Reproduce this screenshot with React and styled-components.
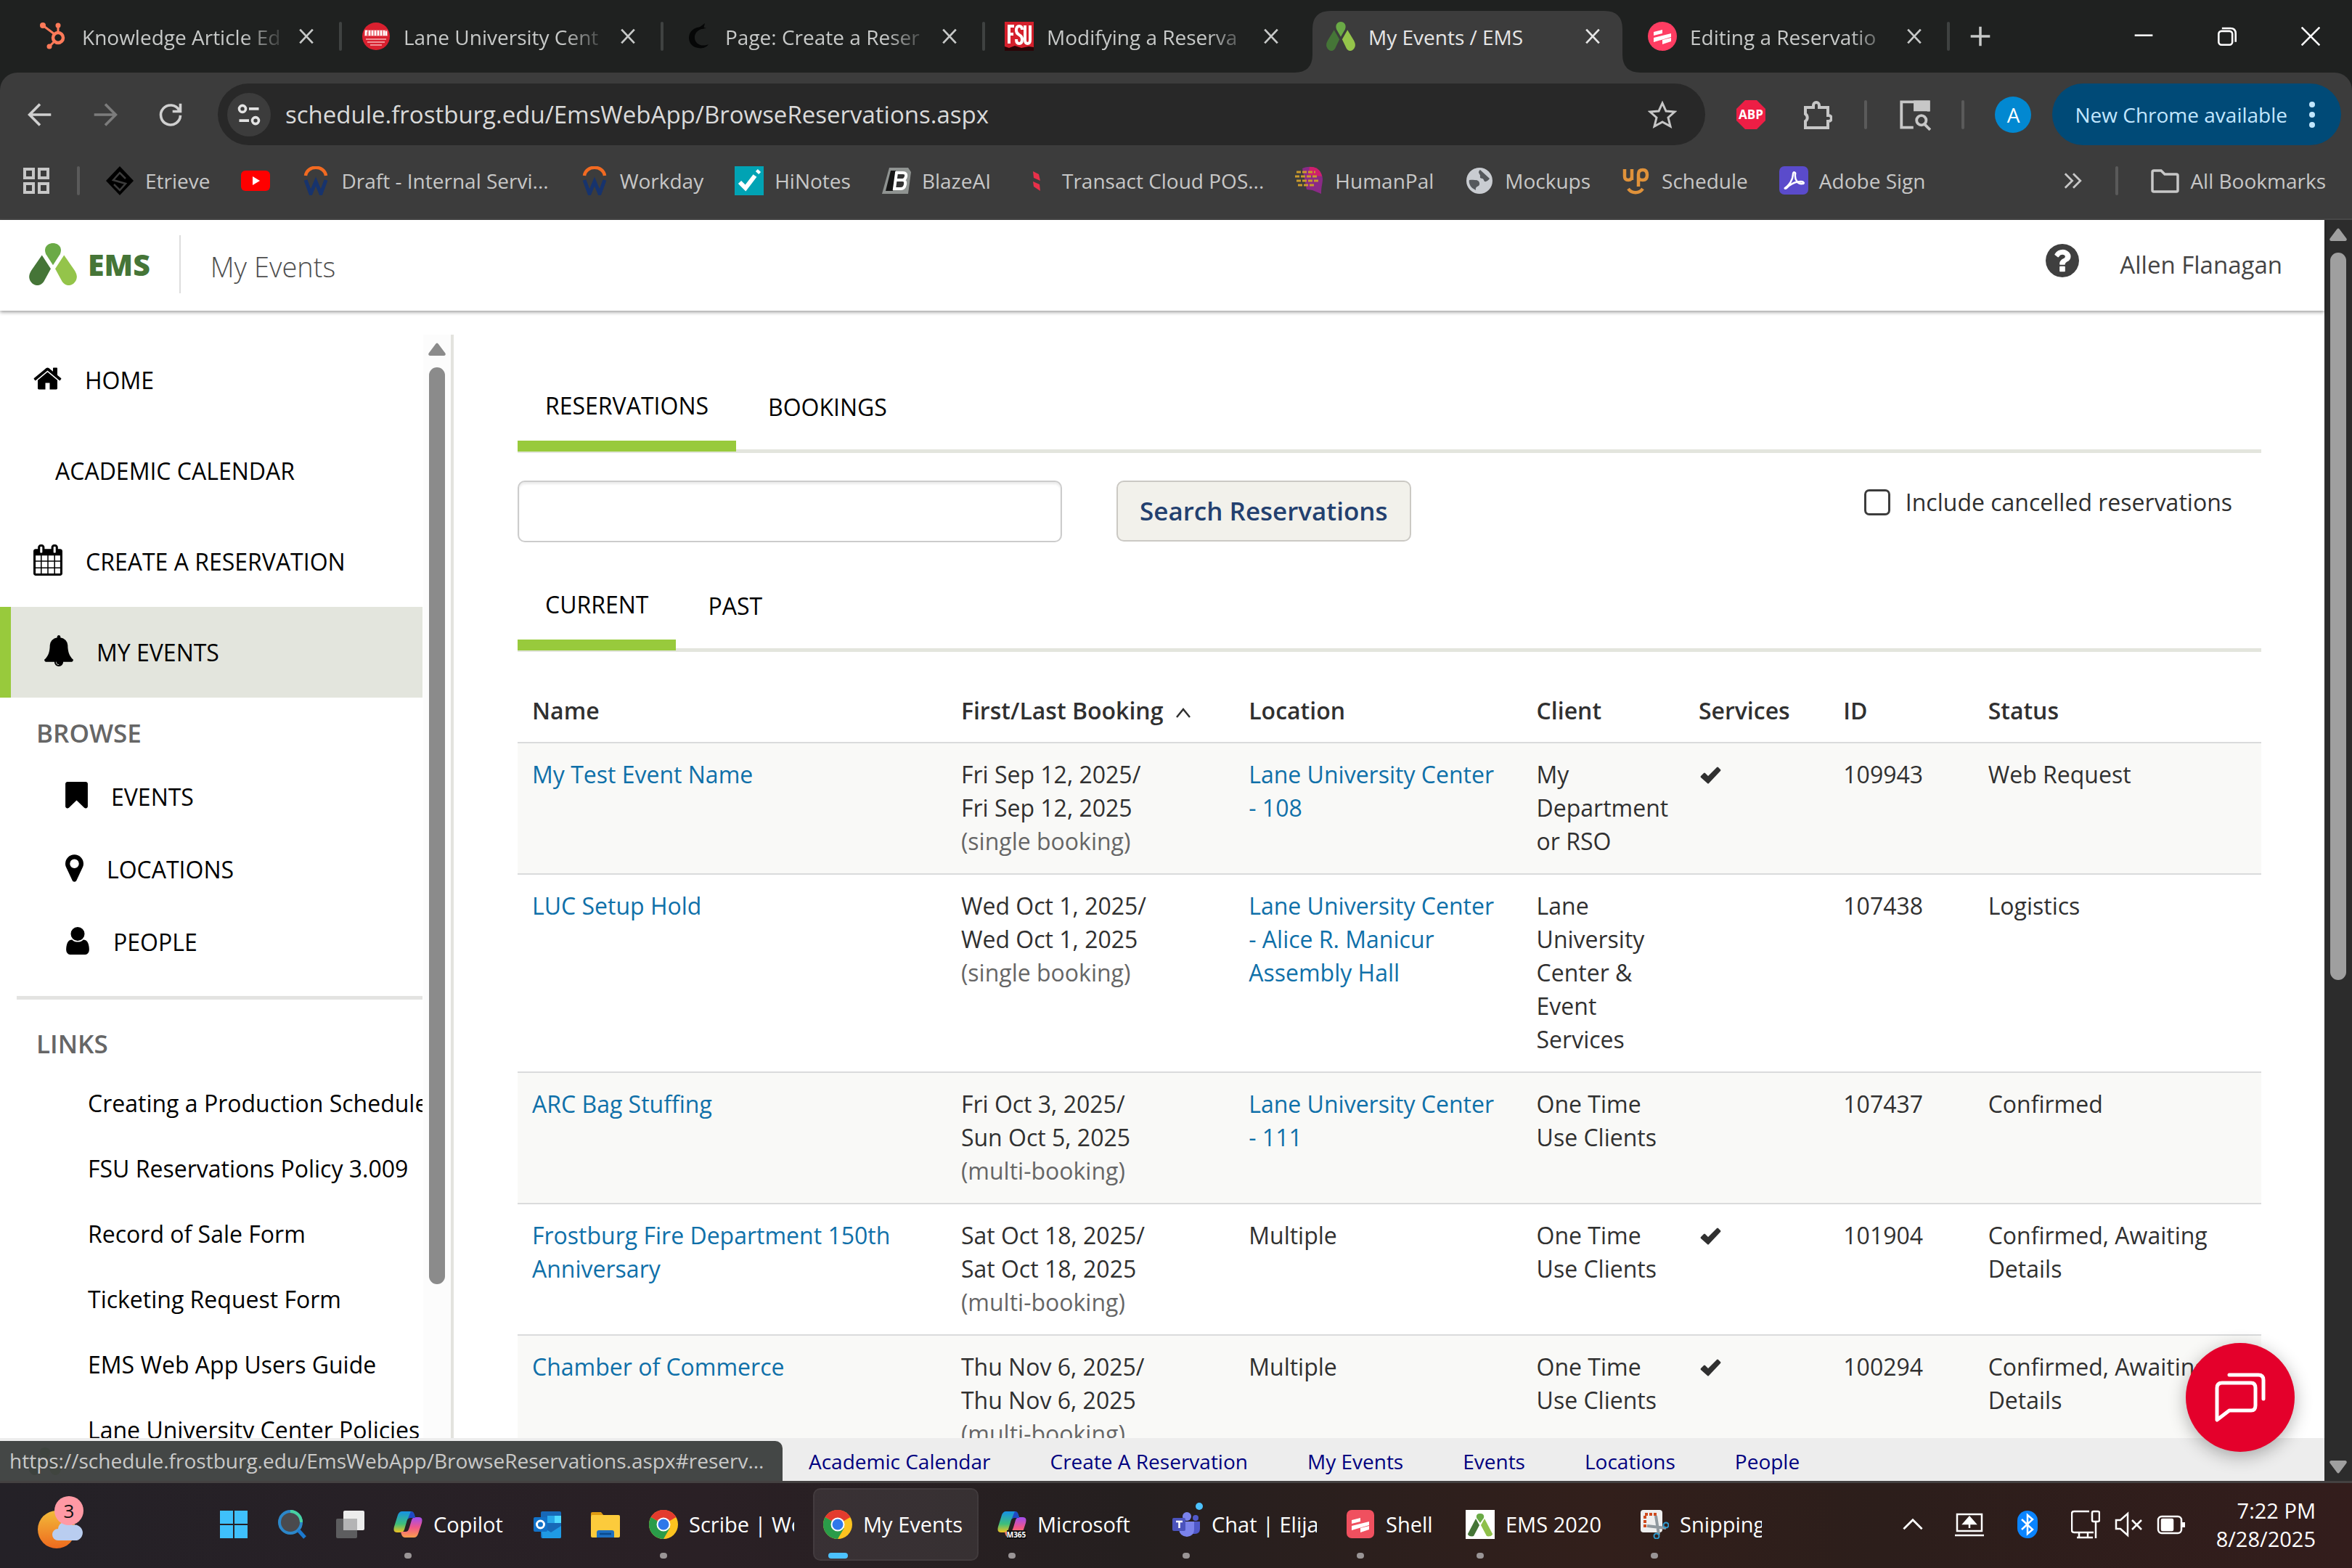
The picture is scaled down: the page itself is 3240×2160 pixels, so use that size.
import React from "react";
import styled, { createGlobalStyle } from "styled-components";

const GlobalStyle = createGlobalStyle`
  *, *::before, *::after { box-sizing: border-box; }
  body { margin: 0; background: #1f2120; font-family: "Open Sans", "Liberation Sans", sans-serif; }
  button, input { font: inherit; color: inherit; margin: 0; }
  button { background: none; border: 0; padding: 0; }
  a { text-decoration: none; color: inherit; }
  svg { display: block; flex: none; }
  ul { list-style: none; margin: 0; padding: 0; }
`;

/* ---------- icons ---------- */

const Line = ({ size = 40, w = 2, children, ...rest }) => (
  <svg width={size} height={size} viewBox="0 0 40 40" fill="none" stroke="currentColor" strokeWidth={w} {...rest}>
    {children}
  </svg>
);
const Art = ({ size = 40, children }) => (
  <svg width={size} height={size} viewBox="0 0 40 40">{children}</svg>
);
const Solid = ({ d, box = "64 0 1664 1792", w = 39, h = 42 }) => (
  <svg width={w} height={h} viewBox={box} fill="currentColor"><path d={d} /></svg>
);

const CloseX = () => <Line size={22} w={5}><path d="M4 3l32 34M36 3L4 37" /></Line>;

const HubSpot = () => (
  <Art>
    <g stroke="#ff7a59" fill="none">
      <circle cx="25" cy="22" r="7" strokeWidth="4.500" />
      <path d="M4 5l16 12M25 6v9M19 28l-6 6" strokeWidth="3" />
    </g>
    <g fill="#ff7a59"><circle cx="4" cy="5" r="4" /><circle cx="25" cy="5" r="3.500" /><circle cx="13" cy="34" r="3.500" /></g>
  </Art>
);
const Frostburg = () => (
  <Art>
    <circle cx="20" cy="20" r="19" fill="#d9202f" />
    <path d="M4 11h32v9H4z" fill="#e8636d" />
    <path d="M5 13h3M5 16h2M6 13v6M11 12v7M15 12v7M19 12v7M23 12v7M27 12v7M31 12v7M34 13v6" stroke="#fff" strokeWidth="2.500" />
    <path d="M6 24h28M8 28h24M12 32h16" stroke="#f6b4b8" strokeWidth="1.500" />
  </Art>
);
const DarkC = () => (
  <Art>
    <path d="M32 9C22 4 8 10 8 22c0 10 9 16 20 14 3-1 6-3 7-5-9 4-18 0-19-8C15 15 22 9 32 9z" fill="#060707" />
    <path d="M22 8l8-6-2 8z" fill="#060707" />
  </Art>
);
const Fsu = () => (
  <Art>
    <rect width="40" height="40" fill="#d5202c" />
    <path d="M0 34l6 2 8-3 9 3 10-2 7 1v5H0z" fill="#2b0406" />
    <path d="M13 6H6v24M6 17h6M24 11q0-5-4-5t-4 6q0 4 4 6t4 6q0 6-4 6t-4-6M28 5v20q0 5 3.500 5t3.500-5V5" fill="none" stroke="#fff" strokeWidth="4" />
  </Art>
);
const EmsMark = ({ w = 65, h = 46 }) => (
  <svg width={w} height={h} viewBox="0 0 130 92" preserveAspectRatio="none">
    <path d="M65 48L46 24C38 10 50 0 65 0s27 10 19 24z" fill="#6aaa46" />
    <path d="M35 26L59 56 40 84C28 98 8 92 2 80c-4-8 0-14 4-20z" fill="#457537" />
    <path d="M95 26L71 56l19 28c12 14 32 8 38-4 4-8 0-14-4-20z" fill="#94c44a" />
  </svg>
);
const ScribeMark = ({ square }) => (
  <Art>
    {square ? <rect x="1" width="38" height="39" rx="7" fill="#f0505f" /> : <circle cx="20" cy="20" r="20" fill="#ff3d62" />}
    <path d="M8 14l12-3v5L8 19zM8 22l24-6v5L8 28zM20 25l12-3v5l-12 4z" fill="#fff" />
  </Art>
);
const Diamond = () => (
  <Art>
    <path d="M20 0l19 20-19 20L1 20z" fill="#000" />
    <path d="M28 17l-8-8-9 10 17 5-8 9-8-8" fill="none" stroke="#3c3c3c" strokeWidth="2.500" />
  </Art>
);
const YouTube = () => (
  <Art><rect x="0" y="6" width="40" height="28" rx="6" fill="#f00" /><path d="M16 14l10 6-10 6z" fill="#fff" /></Art>
);
const WorkdayMark = () => (
  <Art>
    <path d="M6 13C8-2 32-2 34 13" fill="none" stroke="#f26a21" strokeWidth="4.500" />
    <path d="M6 19l7 19 7-17 7 17 7-19" fill="none" stroke="#17336d" strokeWidth="5" />
  </Art>
);
const HiNotesMark = () => (
  <Art><rect width="40" height="40" fill="#00a3b4" /><path d="M7 22l8 8 13-17M31 9l3-3" fill="none" stroke="#fff" strokeWidth="6" /></Art>
);
const BlazeMark = () => (
  <Art>
    <path d="M10 2h26l4 6-4 30H0z" fill="#8f9391" />
    <path d="M12 6L5 34h10l4-28z" fill="#151515" />
    <path d="M20 9h9q5 0 4 5-1 5-5 5 5 0 4 6-1 6-6 6h-9zM19 19h9" fill="#333" stroke="#fff" strokeWidth="4" />
  </Art>
);
const TransactMark = () => (
  <Art><path d="M15 7l8 4 2 9-9-4zM15 21l9 4 1 9-9-6z" fill="#e8304a" /></Art>
);
const HumanPalMark = () => (
  <Art>
    <path d="M10 3C24-3 38 4 38 18c0 6-2 9-2 20l-12-5-8-1z" fill="#8a2a86" />
    <path d="M20 1C32 0 36 8 37 14L18 12z" fill="#cf1f6c" />
    <path d="M2 8h26M0 14h32M2 20h30M4 26h24" stroke="#c99a2c" strokeWidth="3" strokeDasharray="6 2" />
  </Art>
);
const GlobeMark = () => (
  <Art>
    <circle cx="20" cy="20" r="18" fill="#c9ccd1" />
    <path d="M6 19c8-1 15 0 14 6-1 4-6 2-5 8l-5-3c-3-3-5-7-4-11zM21 5c-5 4 1 6 0 9-1 4 4 1 5 5s5 2 8-2" fill="#55585c" />
  </Art>
);
const UpMark = () => (
  <Art>
    <g fill="none" stroke="#e0923a" strokeWidth="4.500">
      <path d="M4 4v10q0 5 5 5t5-5V4v15" /><path d="M23 28V11q0-6 6-6t6 7-6 7-6-4" /><path d="M9 31c5 7 15 7 20 0" />
    </g>
  </Art>
);
const AdobeMark = () => (
  <Art>
    <rect width="40" height="39" rx="7" fill="#5a4bcb" />
    <path d="M8 30c6-4 11-12 11-19 0-4 4-3 3 0-1 8 4 14 10 13 3 0 2-3-2-3-7 0-14 3-20 9-1 1-3 1-2 0z" fill="none" stroke="#fff" strokeWidth="2.500" />
  </Art>
);
const ChromeMark = () => (
  <Art>
    <circle cx="20" cy="20" r="20" fill="#fcc31f" />
    <path d="M20 20L2.700 10A20 20 0 0137.300 10z" fill="#e33b2e" />
    <path d="M2.700 10A20 20 0 0020 40l8.700-15L20 20z" fill="#2a9c49" />
    <path d="M2.700 10A20 20 0 0137.300 10H20z" fill="#e33b2e" />
    <circle cx="20" cy="20" r="9.500" fill="#fff" /><circle cx="20" cy="20" r="7.500" fill="#2f78ea" />
  </Art>
);
const CopilotMark = ({ badge }) => (
  <Art>
    <defs>
      <linearGradient id="cpa" x1="0" y1="0" x2="0" y2="1"><stop offset="0" stopColor="#1591e6" /><stop offset=".6" stopColor="#3fbf7a" /><stop offset="1" stopColor="#f2c320" /></linearGradient>
      <linearGradient id="cpb" x1="0" y1="0" x2="0" y2="1"><stop offset="0" stopColor="#a04df0" /><stop offset=".5" stopColor="#f0568a" /><stop offset="1" stopColor="#fb9f4c" /></linearGradient>
    </defs>
    <path d="M12 2h12c4 0 5 4 6 9h-7c-3 0-4 2-5 6l-3 10c-1 3-3 4-6 4H5c-5 0-5-4-4-8L6 7c1-3 3-5 6-5z" fill="url(#cpa)" />
    <path d="M28 38H16c-4 0-5-4-6-8h7c3 0 4-3 5-6l3-10c1-3 3-4 6-4h4c5 0 5 4 4 8l-5 15c-1 3-3 5-6 5z" fill="url(#cpb)" />
    <path d="M24 2c4 0 5 4 6 9h-7c-2 0-3 1-4 3z" fill="#1f49c4" />
    {badge && <><rect x="13" y="28" width="27" height="12" fill="#111" /><text x="26" y="38" textAnchor="middle" fontSize="10" fontWeight="700" fill="#fff">M365</text></>}
  </Art>
);
const WindowsMark = () => (
  <Art><path d="M1 1h18v18H1zM21 1h18v18H21zM1 21h18v18H1zM21 21h18v18H21z" fill="#3fc0fb" /></Art>
);
const SearchMark = () => (
  <Art>
    <circle cx="18" cy="17" r="15" fill="#4a4a4d" stroke="#2c87c9" strokeWidth="4" />
    <path d="M18 2a15 15 0 0115 15" fill="none" stroke="#48d2a0" strokeWidth="4" />
    <path d="M29 28l9 10" stroke="#1b79cf" strokeWidth="5" />
  </Art>
);
const TaskViewMark = () => (
  <Art><rect x="1" y="12" width="29" height="27" rx="2" fill="#5d5d5f" /><rect x="11" y="1" width="29" height="27" rx="2" fill="#ececec" /><path d="M11 12h19v16H11z" fill="#b4b4b5" /></Art>
);
const OutlookMark = () => (
  <Art>
    <rect x="11" y="2" width="28" height="37" rx="2" fill="#1769b8" /><path d="M20 8h10v10H20z" fill="#28a8ea" /><path d="M30 8h9v10h-9z" fill="#50d9ff" />
    <path d="M11 22l14 9 14-9v15a2 2 0 01-2 2H13z" fill="#1f9ae4" /><rect x="1" y="10" width="19" height="20" rx="2" fill="#1272c8" />
    <circle cx="10.500" cy="20" r="5" fill="none" stroke="#fff" strokeWidth="3" />
  </Art>
);
const FolderMark = () => (
  <Art><path d="M0 5q0-2 2-2h12l4 5H0z" fill="#dd9a13" /><rect y="7" width="40" height="31" rx="2" fill="#fccb3c" /><path d="M8 38V31q0-3 3-3h18q3 0 3 3v7z" fill="#1e6fc0" /><path d="M12 33h16" stroke="#0a4a8c" strokeWidth="2.500" /></Art>
);
const TeamsMark = () => (
  <Art>
    <circle cx="21" cy="9" r="6" fill="#7b83eb" /><circle cx="33" cy="11" r="4" fill="#5059c9" />
    <path d="M26 16h13v10q0 7-7 7h-6z" fill="#5059c9" /><path d="M10 16h21v11q0 9-10 10-10-1-11-10z" fill="#7b83eb" />
    <rect x="1" y="11" width="18" height="18" rx="2" fill="#4b53bc" /><path d="M6 16h9M10.500 16v9" stroke="#fff" strokeWidth="2.500" />
  </Art>
);
const EmsTile = () => (
  <Art>
    <rect width="40" height="40" fill="#fff" />
    <path d="M20 18l-5-7c-1-5 2-6 5-6s6 1 5 6z" fill="#6aaa46" /><path d="M14 12l5 9-8 15c-3 1-8 0-8-3z" fill="#457537" /><path d="M26 12l-5 9 8 15c3 1 8 0 8-3z" fill="#8fc04a" />
  </Art>
);
const SnipMark = () => (
  <Art>
    <rect x="1" width="30" height="31" rx="4" fill="#efefef" /><path d="M7 24V6h18" fill="none" stroke="#cf4a1e" strokeWidth="4" strokeDasharray="4 2" />
    <path d="M22 8l4 26M10 22l26 3" stroke="#90999f" strokeWidth="4" /><circle cx="36" cy="21" r="3.500" fill="none" stroke="#2f9bd0" strokeWidth="2" /><circle cx="23" cy="36" r="3.500" fill="none" stroke="#2f9bd0" strokeWidth="2" />
  </Art>
);
const WeatherMark = () => (
  <svg width="64" height="54" viewBox="0 0 64 54">
    <defs><linearGradient id="sun" x1="0" y1="0" x2="0" y2="1"><stop offset="0" stopColor="#f2bb3a" /><stop offset="1" stopColor="#ee6a1e" /></linearGradient></defs>
    <circle cx="26" cy="27" r="26" fill="url(#sun)" />
    <path d="M28 42a8 8 0 010-16 11 11 0 0120-5 10 10 0 016 21z" fill="#b9cdf0" />
  </svg>
);

const P = {
  home: "M1408 992v480q0 26-19 45t-45 19h-384v-384h-256v384h-384q-26 0-45-19t-19-45v-480q0-1 .5-3t.5-3l575-474 575 474q1 2 1 6zm223-69l-62 74q-8 9-21 11h-3q-13 0-21-7l-692-577-692 577q-12 8-24 7-13-2-21-11l-62-74q-8-10-7-23.5t11-21.5l719-599q32-26 76-26t76 26l244 204v-195q0-14 9-23t23-9h192q14 0 23 9t9 23v408l219 182q10 8 11 21.5t-7 23.5z",
  calendar: "M192 1664h288v-288h-288v288zm352 0h320v-288h-320v288zm-352-352h288v-320h-288v320zm352 0h320v-320h-320v320zm-352-384h288v-288h-288v288zm736 736h320v-288h-320v288zm-384-736h320v-288h-320v288zm768 736h288v-288h-288v288zm-384-352h320v-320h-320v320zm-352-864v-288q0-13-9.5-22.5t-22.5-9.5h-64q-13 0-22.5 9.5t-9.5 22.5v288q0 13 9.5 22.5t22.5 9.5h64q13 0 22.5-9.5t9.5-22.5zm736 864h288v-320h-288v320zm-384-384h320v-288h-320v288zm384 0h288v-288h-288v288zm32-480v-288q0-13-9.5-22.5t-22.5-9.5h-64q-13 0-22.5 9.5t-9.5 22.5v288q0 13 9.5 22.5t22.5 9.5h64q13 0 22.5-9.5t9.5-22.5zm384-64v1280q0 52-38 90t-90 38h-1408q-52 0-90-38t-38-90v-1280q0-52 38-90t90-38h128v-96q0-66 47-113t113-47h64q66 0 113 47t47 113v96h384v-96q0-66 47-113t113-47h64q66 0 113 47t47 113v96h128q52 0 90 38t38 90z",
  bell: "M912 1696q0-16-16-16-59 0-101.5-42.5t-42.5-101.5q0-16-16-16t-16 16q0 73 51.5 124.5t124.5 51.5q16 0 16-16zm816-288q0 52-38 90t-90 38h-448q0 106-75 181t-181 75-181-75-75-181h-448q-52 0-90-38t-38-90q50-42 91-88t85-119.5 74.5-158.5 50-206 19.5-260q0-152 117-282.5t307-158.5q-8-19-8-39 0-40 28-68t68-28 68 28 28 68q0 20-8 39 190 28 307 158.5t117 282.5q0 139 19.5 260t50 206 74.5 158.5 85 119.5 91 88z",
  bookmark: "M1420 128q23 0 44 9 33 13 52.5 41t19.5 62v1289q0 34-19.5 62t-52.5 41q-19 8-44 8-48 0-83-32l-441-424-441 424q-36 33-83 33-23 0-44-9-33-13-52.5-41t-19.5-62v-1289q0-34 19.5-62t52.5-41q21-9 44-9h1048z",
  pin: "M1152 640q0-106-75-181t-181-75-181 75-75 181 75 181 181 75 181-75 75-181zm256 0q0 109-33 179l-364 774q-16 33-47.5 52t-67.5 19-67.5-19-46.5-52l-365-774q-33-70-33-179 0-212 150-362t362-150 362 150 150 362z",
  user: "M1536 1399q0 109-62.5 187t-150.5 78h-854q-88 0-150.5-78t-62.5-187q0-85 8.5-160.5t31.5-152 58.5-131 94-89 134.5-34.5q131 128 313 128t313-128q76 0 134.5 34.5t94 89 58.5 131 31.5 152 8.5 160.5zm-256-887q0 159-112.5 271.5t-271.5 112.5-271.5-112.5-112.5-271.5 112.5-271.5 271.5-112.5 271.5 112.5 112.5 271.5z",
  help: "M1024 1376v-192q0-14-9-23t-23-9h-192q-14 0-23 9t-9 23v192q0 14 9 23t23 9h192q14 0 23-9t9-23zm256-672q0-88-55.5-163t-138.5-116-170-41q-243 0-371 213-15 24 8 42l132 100q7 6 19 6 16 0 25-12 53-68 86-92 34-24 86-24 48 0 85.5 26t37.5 59q0 38-20 61t-68 45q-63 28-115.5 86.5t-52.5 125.5v36q0 14 9 23t23 9h192q14 0 23-9t9-23q0-19 21.5-49.5t54.5-49.5q32-18 49-28.5t46-35 44.5-48 28-60.5 12.5-81zm384 192q0 209-103 385.5t-279.5 279.5-385.5 103-385.5-103-279.5-279.5-103-385.5 103-385.5 279.5-279.5 385.5-103 385.5 103 279.5 279.5 103 385.500z",
};

const TickMark = () => (
  <svg width="32" height="24" viewBox="0 0 32 24" aria-label="Yes">
    <path d="M3 13l4-4q1-1 2 0l4 4L25 1q1-1 2 0l3 3q1 1 0 2L14 23q-1 1-2 0L3 15q-1-1 0-2z" fill="#303030" />
  </svg>
);

/* ---------- browser chrome ---------- */

const Screen = styled.div`
  display: flex; flex-direction: column; height: 100vh; overflow: hidden; color: #2f2f2f;
`;
const TabStrip = styled.div`
  display: flex; align-items: stretch; flex: none; height: 100px; padding-left: 28px;
  background: #1f2120; color: #c7c9c8; font-size: 28px;
`;
const Tab = styled.div`
  position: relative; display: flex; align-items: center; width: 443px; height: 100px;
  padding: 0 38px 0 27px; gap: 14px; color: ${(p) => (p.$active ? "#e6e6e6" : "inherit")};
  ${(p) => p.$line && "&::after { content: ''; position: absolute; right: 0; top: 30px; width: 4px; height: 40px; border-radius: 2px; background: #3f4241; }"}
`;
const ActiveShape = styled.svg`position: absolute; left: -17px; top: 15px; width: 477px; height: 85px;`;
const TabButton = styled.button`
  position: relative; display: flex; align-items: center; gap: 18px; flex: 1; min-width: 0; text-align: left;
`;
const TabTitle = styled.span`
  flex: 1; overflow: hidden; white-space: nowrap; padding-top: 2px; line-height: 48px;
  ${(p) => p.$fade && "mask-image: linear-gradient(90deg, #000 78%, transparent 100%);"}
`;
const TabClose = styled.button`position: relative;`;
const NewTab = styled.button`align-self: center; margin-left: 28px;`;
const WindowButtons = styled.div`display: flex; align-items: center; margin-left: auto; color: #fff;`;
const WindowButton = styled.button`display: grid; place-items: center; width: 115px; height: 100px;`;

const Toolbar = styled.div`
  display: flex; align-items: center; flex: none; height: 115px; padding: 0 15px 0 37px;
  background: #3c3c3c; color: #c7c7c7; border-radius: 24px 24px 0 0;
`;
const NavButtons = styled.div`display: flex; gap: 54px; margin-right: 47px;`;
const NavButton = styled.button`width: 36px; color: ${(p) => (p.$off ? "#7c7c7c" : "#d0d0d0")};`;
const Omnibox = styled.div`
  display: flex; align-items: center; flex: 1; height: 85px; padding: 0 39px 0 13px; border-radius: 43px; background: #282828;
`;
const SiteInfo = styled.button`display: grid; place-items: center; width: 60px; height: 60px; border-radius: 50%; background: #3c3c3c; color: #e3e3e3;`;
const Url = styled.input`flex: 1; min-width: 0; margin-left: 20px; padding: 0; border: 0; background: none; color: #dadada; font-size: 33px; line-height: 48px;`;
const Extensions = styled.div`display: flex; align-items: center; margin-left: 43px;`;
const Gap = styled.div`width: ${(p) => p.$w}px;`;
const Rule = styled.div`width: 4px; height: 40px; border-radius: 2px; background: #5a5a5a;`;
const Avatar = styled.button`width: 50px; height: 50px; border-radius: 50%; background: #0288d1; color: #fff; font-size: 28px; line-height: 50px;`;
const UpdatePill = styled.button`
  display: flex; align-items: center; gap: 30px; height: 85px; margin-left: 29px; padding: 0 36px 0 31px; border-radius: 43px;
  background: #004a77; color: #c2e7ff; font-size: 28px; white-space: nowrap;
`;

const Bookmarks = styled.div`
  display: flex; align-items: center; flex: none; height: 88px; padding: 0 36px 18px 30px; background: #3c3c3c;
  border-bottom: 2px solid #474747; color: #c7c7c7; font-size: 28px; white-space: nowrap;
`;
const BookmarkList = styled.nav`display: flex; gap: 43px; margin-left: 35px;`;
const Bookmark = styled.a`display: flex; align-items: center; gap: 15px; line-height: 44px;`;
const BookmarkEnd = styled.div`display: flex; align-items: center; margin-left: auto; gap: 44px;`;

/* ---------- page ---------- */

const Viewport = styled.div`position: relative; display: flex; flex: 1; min-height: 0; border-bottom: 3px solid #444141; background: #fff;`;
const Page = styled.div`position: relative; display: flex; flex-direction: column; flex: 1; min-width: 0;`;
const Scroll = styled.div`
  display: flex; flex-direction: column; align-items: center; flex: none; width: 38px;
  padding: ${(p) => p.$pad}; background: ${(p) => (p.$dark ? "#2c2c2c" : "#fcfcfc")}; color: ${(p) => (p.$dark ? "#9f9f9f" : "#8b8b8b")};
`;
const Thumb = styled.div`width: 22px; margin: 16px 0 auto; border-radius: 11px; height: ${(p) => p.$h}; background: currentColor;`;
const Header = styled.header`
  position: relative; display: flex; align-items: center; flex: none; height: 125px; padding: 0 58px 4px 40px;
  background: #fff; box-shadow: 0 2px 5px rgba(0, 0, 0, .4);
`;
const Brand = styled.a`
  display: flex; align-items: center; gap: 15px; height: 80px; padding-right: 40px; border-right: 2px solid #ddd;
  color: #457537; font-size: 41px; font-weight: 800; line-height: 48px;
`;
const PageTitle = styled.h1`margin: 6px auto 0 41px; color: #4f4f4f; font-size: 38px; font-weight: 300; line-height: 48px;`;
const HelpButton = styled.button`margin: 0 56px 10px 0; color: #3f3f3f;`;
const UserButton = styled.button`padding-top: 2px; color: #444; font-size: 33px; line-height: 48px;`;

const Body = styled.div`display: flex; flex: 1; min-height: 0; overflow: hidden;`;
const Sidebar = styled.aside`display: flex; flex: none; width: 625px; margin-top: 33px; border-right: 4px solid #e3e3de; color: #000; font-size: 32px;`;
const SideNav = styled.nav`flex: 1; min-width: 0; overflow: hidden; margin-right: 1px; white-space: nowrap;`;
const SideItem = styled.a`
  display: flex; align-items: center; gap: 32px; height: 125px; padding-left: ${(p) => p.$indent || 46}px; line-height: 48px;
  svg { margin-bottom: 5px; }
  ${(p) => p.$active && "background: #e3e5dd; border-left: 15px solid #98ca3c;"}
`;
const SideHeading = styled.h2`margin: 0; padding: ${(p) => p.$pad}; color: #666; font-size: 35px; font-weight: 600; line-height: 48px;`;
const SubItem = styled(SideItem)`height: 100px; padding-left: 90px;`;
const SideRule = styled.hr`height: 5px; margin: 24px 0 0 23px; border: 0; background: #e3e3e1;`;
const SideLink = styled.a`display: block; padding-left: 121px; line-height: 90px;`;

const Main = styled.main`flex: 1; min-width: 0; padding: 107px 87px 0 88px; font-size: 32px; line-height: 46px;`;
const Tabs = styled.div`display: flex; align-items: flex-start; margin-top: ${(p) => p.$top || 0}px; height: 89px; border-bottom: 5px solid #e3e5dd; color: #000;`;
const PageTab = styled.button`
  line-height: 48px;
  ${(p) => (p.$active ? "height: 87px; padding: 0 38px 24px; border-bottom: 15px solid #98ca3c;" : "padding: 2px 44px 0;")}
`;
const SearchRow = styled.form`display: flex; align-items: flex-start; margin-top: 38px;`;
const SearchBox = styled.input`
  width: 750px; height: 85px; padding: 0 20px; border: 2px solid #ccc; border-radius: 10px; background: #fff; box-shadow: inset 0 3px 3px rgba(0, 0, 0, .08);
`;
const SearchButton = styled.button`
  height: 84px; margin-left: 75px; padding: 0 30px; border: 2px solid #cbc9c4; border-radius: 10px; background: #f2f1eb; color: #23406f; font-size: 35px; font-weight: 600;
`;
const CheckLabel = styled.label`display: flex; align-items: center; gap: 21px; margin: 7px 40px 0 auto; color: #2f2f2f;`;
const CheckInput = styled.input`appearance: none; width: 36px; height: 36px; border: 3px solid #3c3c3c; border-radius: 7px; background: #fff;`;

const Table = styled.table`width: 100%; margin-top: 36px; border-collapse: separate; border-spacing: 0; table-layout: fixed; color: #303030;`;
const Col = styled.col`width: ${(p) => p.$w}%;`;
const Th = styled.th`padding: 22px 10px 20px 20px; border-bottom: 2px solid #dadbdc; text-align: left; font-weight: 600; white-space: nowrap;`;
const SortIcon = styled.svg`display: inline-block; margin-left: 18px; vertical-align: middle;`;
const Row = styled.tr`background: ${(p) => (p.$odd ? "#f9f9f7" : "#fff")};`;
const Td = styled.td`padding: 20px ${(p) => (p.$wide ? 30 : 10)}px 21px 20px; border-bottom: 2px solid #dadbdc; vertical-align: top; svg { margin-top: 12px; }`;
const CellLink = styled.a`color: #0f70a9;`;
const Note = styled.span`display: block; color: #666;`;
const DateLine = styled.span`display: block;`;

const Footer = styled.footer`
  display: flex; align-items: center; flex: none; height: 59px; padding: 4px 40px 0; background: #ededed; color: #00007f; font-size: 28px; white-space: nowrap;
`;
const FooterInfo = styled.div`width: 1074px;`;
const FooterNav = styled.nav`display: flex; gap: 82px;`;
const LinkHint = styled.div`
  position: absolute; left: 0; bottom: 0; width: 1078px; height: 55px; padding: 0 13px; border-radius: 0 10px 0 0;
  background: rgba(60, 63, 62, .96); color: #c9c9c9; font-size: 28px; line-height: 54px; white-space: nowrap;
`;
const ChatButton = styled.button`
  position: absolute; right: 41px; bottom: 40px; display: grid; place-items: center; width: 150px; height: 150px; border-radius: 50%;
  background: #e4002b; color: #fff; box-shadow: 0 6px 24px rgba(0, 0, 0, .3);
`;

/* ---------- taskbar ---------- */

const Taskbar = styled.div`
  display: flex; align-items: center; flex: none; height: 117px; padding: 0 50px 4px 52px; color: #fff; font-size: 29px;
  background: linear-gradient(90deg, #242127 0%, #2a2025 30%, #251f1f 48%, #321f1b 68%, #2c1e1b 80%, #331d1c 100%);
`;
const Weather = styled.button`position: relative; width: 64px; margin-top: 14px;`;
const WeatherBadge = styled.span`position: absolute; left: 23px; top: -19px; width: 40px; height: 40px; border-radius: 50%; background: #ff99a4; color: #111; font-size: 26px; line-height: 40px;`;
const Apps = styled.div`display: flex; gap: 12px; margin-left: 172px;`;
const AppItem = styled.button`
  position: relative; display: flex; align-items: center; gap: 15px; width: ${(p) => p.$w || 68}px; height: 100px; padding: 0 14px; border-radius: 10px;
  ${(p) => p.$active && "background: rgba(255, 255, 255, .08); box-shadow: inset 0 0 0 2px rgba(255, 255, 255, .05);"}
  ${(p) => p.$run && `&::after { content: ""; position: absolute; bottom: 3px; height: 8px; border-radius: 4px; left: ${p.$active ? 21 : 29}px; width: ${p.$active ? 27 : 10}px; background: ${p.$active ? "#4cc2ff" : "#9a9596"}; }`}
`;
const AppLabel = styled.span`flex: 1; overflow: hidden; white-space: nowrap; text-align: left; line-height: 44px;`;
const Alert = styled.span`position: absolute; left: 47px; top: 20px; width: 10px; height: 10px; border-radius: 50%; background: #4cc2ff;`;
const Tray = styled.div`display: flex; align-items: center; gap: 20px; margin-left: auto;`;
const TrayGroup = styled.div`display: flex; align-items: center; gap: ${(p) => p.$gap}px;`;
const Clock = styled.time`margin-left: 22px; text-align: right; line-height: 39px;`;

const browserTabs = [
  { t: "Knowledge Article Ed", i: <HubSpot />, fade: true, line: true },
  { t: "Lane University Cent", i: <Frostburg />, fade: true, line: true },
  { t: "Page: Create a Reser", i: <DarkC />, fade: true, line: true },
  { t: "Modifying a Reserva", i: <Fsu />, fade: true },
  { t: "My Events / EMS", i: <EmsMark w={40} h={40} />, active: true },
  { t: "Editing a Reservatio", i: <ScribeMark />, fade: true, line: true },
];
const bookmarks = [
  ["Etrieve", <Diamond />], ["", <YouTube />], ["Draft - Internal Servi...", <WorkdayMark />], ["Workday", <WorkdayMark />],
  ["HiNotes", <HiNotesMark />], ["BlazeAI", <BlazeMark />], ["Transact Cloud POS...", <TransactMark />], ["HumanPal", <HumanPalMark />],
  ["Mockups", <GlobeMark />], ["Schedule", <UpMark />], ["Adobe Sign", <AdobeMark />],
];
const sideLinks = ["Creating a Production Schedule", "FSU Reservations Policy 3.009", "Record of Sale Form", "Ticketing Request Form", "EMS Web App Users Guide", "Lane University Center Policies"];
const rows = [
  ["My Test Event Name", "Fri Sep 12, 2025/", "Fri Sep 12, 2025", "(single booking)", "Lane University Center - 108", "My Department or RSO", true, "109943", "Web Request"],
  ["LUC Setup Hold", "Wed Oct 1, 2025/", "Wed Oct 1, 2025", "(single booking)", "Lane University Center - Alice R. Manicur Assembly Hall", "Lane University Center & Event Services", false, "107438", "Logistics"],
  ["ARC Bag Stuffing", "Fri Oct 3, 2025/", "Sun Oct 5, 2025", "(multi-booking)", "Lane University Center - 111", "One Time Use Clients", false, "107437", "Confirmed"],
  ["Frostburg Fire Department 150th Anniversary", "Sat Oct 18, 2025/", "Sat Oct 18, 2025", "(multi-booking)", "Multiple", "One Time Use Clients", true, "101904", "Confirmed, Awaiting Details"],
  ["Chamber of Commerce", "Thu Nov 6, 2025/", "Thu Nov 6, 2025", "(multi-booking)", "Multiple", "One Time Use Clients", true, "100294", "Confirmed, Awaiting Details"],
];
const apps = [
  { n: "Start", i: <WindowsMark /> }, { n: "Search", i: <SearchMark /> }, { n: "Task view", i: <TaskViewMark /> },
  { l: "Copilot", i: <CopilotMark />, w: 180, run: true }, { n: "Outlook", i: <OutlookMark /> }, { n: "Files", i: <FolderMark /> },
  { l: "Scribe | Wo", i: <ChromeMark />, w: 228, run: true }, { l: "My Events", i: <ChromeMark />, w: 228, run: true, active: true },
  { l: "Microsoft", i: <CopilotMark badge />, w: 228, run: true }, { l: "Chat | Elija", i: <TeamsMark />, w: 228, run: true, alert: true },
  { l: "Shell", i: <ScribeMark square />, w: 153, run: true }, { l: "EMS 2020", i: <EmsTile />, w: 228, run: true },
  { l: "Snipping", i: <SnipMark />, w: 196, run: true },
];

const Arrow = ({ down }) => (
  <svg width="24" height="18" viewBox="0 0 24 18"><path d={down ? "M2 0h20q3 1 1 4L14 16q-2 3-4 0L1 4q-2-3 1-4z" : "M2 18h20q3-1 1-4L14 2q-2-3-4 0L1 14q-2 3 1 4z"} fill="currentColor" /></svg>
);

export default function App() {
  return (
    <Screen>
      <GlobalStyle />
      <TabStrip>
        {browserTabs.map((b) => (
          <Tab key={b.t} $active={b.active} $line={b.line}>
            {b.active && <ActiveShape viewBox="0 0 477 85"><path d="M0 85Q25 85 25 60V25Q25 0 50 0H427Q452 0 452 25V60Q452 85 477 85z" fill="#3c3c3c" /></ActiveShape>}
            <TabButton>{b.i}<TabTitle $fade={b.fade}>{b.t}</TabTitle></TabButton>
            <TabClose aria-label="Close tab"><CloseX /></TabClose>
          </Tab>
        ))}
        <NewTab aria-label="New tab"><Line size={28} w={5}><path d="M20 1v38M1 20h38" /></Line></NewTab>
        <WindowButtons>
          <WindowButton aria-label="Minimize"><Line size={26} w={4}><path d="M1 18h38" /></Line></WindowButton>
          <WindowButton aria-label="Restore"><Line size={26} w={4}><rect x="2" y="9" width="29" height="29" rx="6" /><path d="M9 3h18q11 0 11 11v18" /></Line></WindowButton>
          <WindowButton aria-label="Close"><Line size={26} w={4}><path d="M1 1l38 38M39 1L1 39" /></Line></WindowButton>
        </WindowButtons>
      </TabStrip>

      <Toolbar>
        <NavButtons>
          <NavButton aria-label="Back"><Line size={36} w={4}><path d="M37 20H5M20 4L4 20l16 16" /></Line></NavButton>
          <NavButton aria-label="Forward" $off><Line size={36} w={4}><path d="M3 20h32M20 4l16 16-16 16" /></Line></NavButton>
          <NavButton aria-label="Reload"><Line size={36} w={4}><path d="M33 13A15 15 0 1035 21M35 3v12H23" /></Line></NavButton>
        </NavButtons>
        <Omnibox>
          <SiteInfo aria-label="Site information"><Line size={36} w={4}><circle cx="10" cy="11" r="5" /><path d="M20 11h15M5 29h15" /><circle cx="30" cy="29" r="5" /></Line></SiteInfo>
          <Url aria-label="Address" defaultValue="schedule.frostburg.edu/EmsWebApp/BrowseReservations.aspx" />
          <button aria-label="Bookmark this page"><Line w={3}><path d="M20 4l5 11 12 1-9 8 3 12-11-6-11 6 3-12-9-8 12-1z" /></Line></button>
        </Omnibox>
        <Extensions>
          <button aria-label="Adblock Plus"><Art><path d="M12 0h16l12 12v16L28 40H12L0 28V12z" fill="#ed1e45" /><text x="20" y="26" textAnchor="middle" fontSize="17" fontWeight="700" fill="#fff">ABP</text></Art></button>
          <Gap $w={52} />
          <button aria-label="Extensions"><Line w={4}><path d="M3 10h11V7a4 4 0 018 0v3h12v11h1a4 4 0 010 8h-1v9H3v-9a6 6 0 000-10z" /></Line></button>
          <Gap $w={44} /><Rule /><Gap $w={44} />
          <button aria-label="Search tabs"><Line size={44} w={3.500}><path d="M18 36H3V4h34v12" /><path d="M20 4h17v10H20z" fill="currentColor" /><circle cx="28" cy="27" r="6" /><path d="M32 32l7 7" /></Line></button>
          <Gap $w={42} /><Rule /><Gap $w={42} />
          <Avatar>A</Avatar>
          <UpdatePill>New Chrome available
            <svg width="8" height="38" viewBox="0 0 8 38" fill="currentColor"><circle cx="4" cy="5" r="4" /><circle cx="4" cy="19" r="4" /><circle cx="4" cy="33" r="4" /></svg>
          </UpdatePill>
        </Extensions>
      </Toolbar>

      <Bookmarks>
        <button aria-label="Apps"><Line w={4}><path d="M4 4h12v12H4zM24 4h12v12H24zM4 24h12v12H4zM24 24h12v12H24z" /></Line></button>
        <Gap $w={36} /><Rule />
        <BookmarkList>
          {bookmarks.map(([t, i], n) => <Bookmark key={n} href="#" aria-label={t || "YouTube"}>{i}{t && <span>{t}</span>}</Bookmark>)}
        </BookmarkList>
        <BookmarkEnd>
          <button aria-label="More bookmarks"><Line size={28} w={4}><path d="M4 6l14 14L4 34M20 6l14 14-14 14" /></Line></button>
          <Rule />
          <Bookmark href="#"><Line w={3.500}><path d="M3 33V8q0-2 2-2h10l5 5h16q2 0 2 2v20q0 2-2 2H5q-2 0-2-2z" /></Line><span>All Bookmarks</span></Bookmark>
        </BookmarkEnd>
      </Bookmarks>

      <Viewport>
        <Page>
          <Header>
            <Brand href="#"><EmsMark w={66} h={58} />EMS</Brand>
            <PageTitle>My Events</PageTitle>
            <HelpButton aria-label="Help"><Solid d={P.help} box="128 128 1536 1536" w={46} h={46} /></HelpButton>
            <UserButton>Allen Flanagan</UserButton>
          </Header>
          <Body>
            <Sidebar>
              <SideNav>
                <SideItem href="#"><Solid d={P.home} box="0 190 1664 1410" w={39} h={33} />HOME</SideItem>
                <SideItem href="#" $indent={76}>ACADEMIC CALENDAR</SideItem>
                <SideItem href="#"><Solid d={P.calendar} box="64 0 1664 1792" w={40} h={43} />CREATE A RESERVATION</SideItem>
                <SideItem href="#" $active><Solid d={P.bell} box="64 0 1664 1792" w={40} h={43} />MY EVENTS</SideItem>
                <SideHeading $pad="25px 0 14px 50px">BROWSE</SideHeading>
                <SubItem href="#"><Solid d={P.bookmark} box="256 128 1280 1536" w={31} h={37} />EVENTS</SubItem>
                <SubItem href="#"><Solid d={P.pin} box="384 128 1024 1536" w={25} h={38} />LOCATIONS</SubItem>
                <SubItem href="#"><Solid d={P.user} box="256 128 1280 1536" w={34} h={38} />PEOPLE</SubItem>
                <SideRule />
                <SideHeading $pad="37px 0 13px 50px">LINKS</SideHeading>
                {sideLinks.map((l) => <SideLink key={l} href="#">{l}</SideLink>)}
              </SideNav>
              <Scroll $pad="11px 0 0"><Arrow /><Thumb $h="1263px" /></Scroll>
            </Sidebar>
            <Main>
              <Tabs><PageTab $active>RESERVATIONS</PageTab><PageTab>BOOKINGS</PageTab></Tabs>
              <SearchRow onSubmit={(e) => e.preventDefault()}>
                <SearchBox type="text" aria-label="Search reservations" />
                <SearchButton>Search Reservations</SearchButton>
                <CheckLabel><CheckInput type="checkbox" />Include cancelled reservations</CheckLabel>
              </SearchRow>
              <Tabs $top={62}><PageTab $active>CURRENT</PageTab><PageTab>PAST</PageTab></Tabs>
              <Table>
                <colgroup>{[24.6, 16.5, 16.5, 9.3, 8.3, 8.3, 16.5].map((w, n) => <Col key={n} $w={w} />)}</colgroup>
                <thead>
                  <tr>
                    <Th>Name</Th>
                    <Th>First/Last Booking<SortIcon width="20" height="14" viewBox="0 0 20 14"><path d="M1 13l9-11 9 11" fill="none" stroke="#303030" strokeWidth="2.500" /></SortIcon></Th>
                    <Th>Location</Th><Th>Client</Th><Th>Services</Th><Th>ID</Th><Th>Status</Th>
                  </tr>
                </thead>
                <tbody>
                  {rows.map((r, n) => (
                    <Row key={r[7]} $odd={n % 2 === 0}>
                      <Td><CellLink href="#">{r[0]}</CellLink></Td>
                      <Td><DateLine>{r[1]}</DateLine><DateLine>{r[2]}</DateLine><Note>{r[3]}</Note></Td>
                      <Td $wide>{r[4] === "Multiple" ? r[4] : <CellLink href="#">{r[4]}</CellLink>}</Td>
                      <Td>{r[5]}</Td>
                      <Td>{r[6] && <TickMark />}</Td>
                      <Td>{r[7]}</Td>
                      <Td>{r[8]}</Td>
                    </Row>
                  ))}
                </tbody>
              </Table>
            </Main>
          </Body>
          <Footer>
            <FooterInfo><EmsMark w={44} h={38} /></FooterInfo>
            <FooterNav>{["Academic Calendar", "Create A Reservation", "My Events", "Events", "Locations", "People"].map((l) => <a key={l} href="#">{l}</a>)}</FooterNav>
          </Footer>
          <ChatButton aria-label="Open chat">
            <svg width="70" height="70" viewBox="0 0 70 70" fill="none" stroke="currentColor" strokeWidth="5" strokeLinejoin="round" strokeLinecap="round">
              <path d="M20 4h40q7 0 7 7v26" /><path d="M3 66V22q0-7 7-7h40q6 0 6 7v24q0 7-6 7H20z" />
            </svg>
          </ChatButton>
        </Page>
        <Scroll $dark $pad="11px 0 10px"><Arrow /><Thumb $h="1002px" /><Arrow down /></Scroll>
        <LinkHint>https://schedule.frostburg.edu/EmsWebApp/BrowseReservations.aspx#reserv...</LinkHint>
      </Viewport>

      <Taskbar>
        <Weather aria-label="Weather"><WeatherMark /><WeatherBadge>3</WeatherBadge></Weather>
        <Apps>
          {apps.map((a) => (
            <AppItem key={a.l ? a.l : a.n} aria-label={a.n} $w={a.w} $run={a.run} $active={a.active}>
              {a.i}{a.l && <AppLabel>{a.l}</AppLabel>}{a.alert && <Alert />}
            </AppItem>
          ))}
        </Apps>
        <Tray>
          <button aria-label="Show hidden icons"><Line size={28} w={4}><path d="M2 29L20 11l18 18" /></Line></button>
          <Gap $w={4} />
          <TrayGroup $gap={40}>
            <Line w={2.500}><path d="M3 6h34v23H3zM0 35h40" /><path d="M20 25V16" /><path d="M12 19l8-9 8 9z" fill="#fff" /></Line>
            <Line w={2.500}><rect x="6" y="1" width="28" height="38" rx="14" fill="#0a84ff" stroke="none" /><path d="M12 13l15 14-7 6V7l7 6-15 14" /></Line>
            <TrayGroup $gap={19}>
              <Line w={2.500}><path d="M25 2H4q-3 0-3 3v23q0 3 3 3h27M11 31v7M23 31v7M8 38h22" /><rect x="29" y="2" width="10" height="14" rx="2" /><path d="M34 16v23" /></Line>
              <Line w={2.500}><path d="M3 14h6L19 5v30l-10-9H3zM25 14l13 13M38 14L25 27" /></Line>
              <Line w={2.500}><rect x="2" y="9" width="32" height="23" rx="5" /><path d="M37 17v7" strokeWidth="4" /><rect x="7" y="13" width="15" height="15" rx="1" fill="#fff" /></Line>
            </TrayGroup>
          </TrayGroup>
          <Clock>7:22 PM<br />8/28/2025</Clock>
        </Tray>
      </Taskbar>
    </Screen>
  );
}
